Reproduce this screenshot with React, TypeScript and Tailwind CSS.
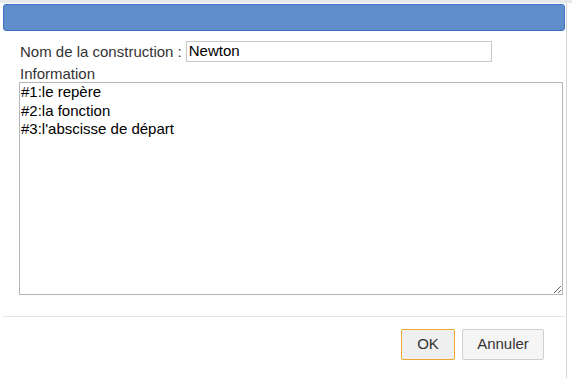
import React from "react";

export default function App() {
  return (
    <div className="w-[572px] h-[378px] bg-white relative overflow-hidden font-['Liberation_Sans',Arial,sans-serif]">
      <div className="h-[3px] bg-[#e8e8e8]" />
      <div className="w-[567px] h-[375px] border-r border-[#d4d4d4] pl-[3px] pr-[1px] flex flex-col">
        <div className="h-[27px] mt-[1px] bg-[#608dcc] border border-[#3f72c2] rounded-[3px]" />
        <div className="flex items-center mt-[10px] pl-[17px]">
          <span className="text-[15px] text-[#333] leading-none">Nom de la construction :</span>
          <input
            defaultValue="Newton"
            className="ml-[4px] w-[306px] h-[21px] border border-[#c8c8c8] px-[2px] text-[15px] text-black outline-none"
          />
        </div>
        <div className="pl-[17px] mt-[4px] text-[15px] text-[#333] leading-[16px]">Information</div>
        <textarea
          defaultValue={"#1:le repère\n#2:la fonction\n#3:l'abscisse de départ"}
          className="ml-[16px] mt-[0px] w-[544px] h-[213px] border border-[#b5b5b5] px-[1px] py-[0px] text-[15px] leading-[18.5px] text-black resize-y outline-none"
        />
        <div className="mt-[21px] border-t border-[#e5e5e5]" />
        <div className="flex justify-end gap-[7px] pr-[21px] mt-[12px]">
          <button className="w-[54px] h-[31px] bg-[#efefef] border border-[#f0a830] rounded-[2px] text-[15px] text-[#333]">OK</button>
          <button className="w-[82px] h-[31px] bg-[#f5f5f5] border border-[#cfcfcf] rounded-[2px] text-[15px] text-[#333]">Annuler</button>
        </div>
      </div>
    </div>
  );
}
